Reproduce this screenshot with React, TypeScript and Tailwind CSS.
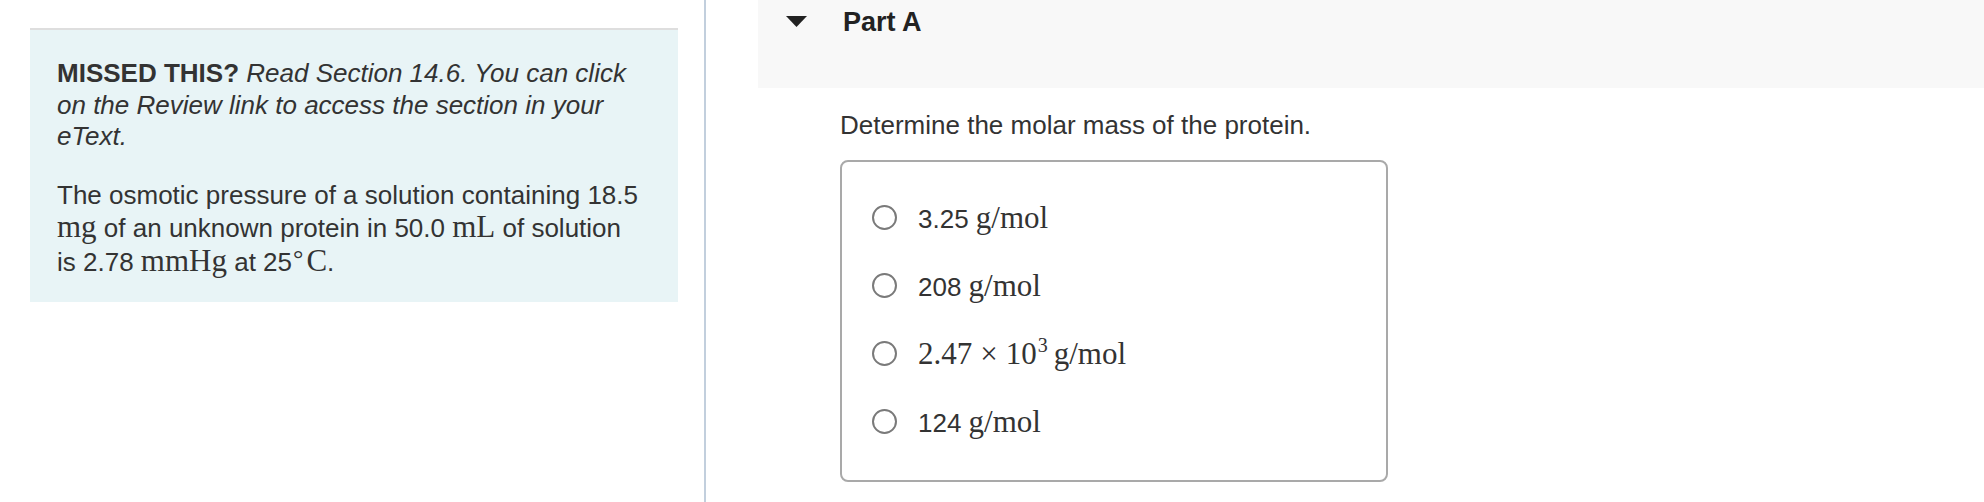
import React from "react";

const serif = "font-['Liberation_Serif','Times_New_Roman',serif] text-[31px]";

const options: React.ReactNode[] = [
  <>
    3.25 <span className={serif}>g/mol</span>
  </>,
  <>
    208 <span className={serif}>g/mol</span>
  </>,
  <span className={serif}>
    2.47<span className="mx-[8px]">×</span>10
    <sup className="text-[20px] relative top-[-12px] ml-[1px] mr-[6px]">3</sup>g/mol
  </span>,
  <>
    124 <span className={serif}>g/mol</span>
  </>,
];

export default function App() {
  return (
    <div className="flex w-[1984px] h-[502px] bg-white text-[#333333] font-['Liberation_Sans',Arial,sans-serif] overflow-hidden">
      {/* Left column: hint box */}
      <div className="w-[704px] shrink-0 pl-[30px] pt-[28px]">
        <div className="w-[648px] bg-[#e8f4f6] border-t-2 border-[#dedede] px-[27px] pt-[28px] pb-[23px] text-[26px] leading-[31.6px]">
          <p>
            <strong className="font-bold">MISSED THIS?</strong>{" "}
            <em className="italic">
              Read Section 14.6. You can click on the Review link to access the section in your eText.
            </em>
          </p>
          <p className="mt-[27px]">
            The osmotic pressure of a solution containing 18.5 <span className={serif}>mg</span> of an unknown
            protein in 50.0 <span className={serif}>mL</span> of solution
            <br />
            is 2.78 <span className={serif}>mmHg</span> at 25
            <span className={serif}>
              <span className="text-[26px] relative top-[-4px] ml-[1px] mr-[3px]">°</span>C
            </span>
            .
          </p>
        </div>
      </div>

      {/* Divider */}
      <div className="w-[2px] shrink-0 bg-[#c2cfdd]" />

      {/* Right column: question */}
      <div className="flex-1 pl-[52px]">
        <div className="h-[88px] bg-[#f8f8f8] flex items-start pl-[28px] pt-[6px]">
          <svg width="21" height="11" viewBox="0 0 21 11" className="mt-[10px] shrink-0">
            <path d="M0 0 H21 L10.5 11 Z" fill="#222222" />
          </svg>
          <h2 className="ml-[36px] text-[27px] leading-[32px] font-bold text-[#222222]">Part A</h2>
        </div>

        <div className="pl-[82px]">
          <p className="mt-[21px] text-[26px] leading-[32px]">Determine the molar mass of the protein.</p>

          <div className="mt-[19px] w-[548px] h-[322px] border-2 border-[#a9a9a9] rounded-[8px] pt-[34px] pl-[30px] flex flex-col gap-[26px]">
            {options.map((opt, i) => (
              <label key={i} className="flex items-center h-[42px] text-[26px] leading-none">
                <span className="w-[25px] h-[25px] rounded-full border-2 border-[#7a7a7a] bg-white shrink-0" />
                <span className="ml-[21px] whitespace-nowrap">{opt}</span>
              </label>
            ))}
          </div>
        </div>
      </div>
    </div>
  );
}
